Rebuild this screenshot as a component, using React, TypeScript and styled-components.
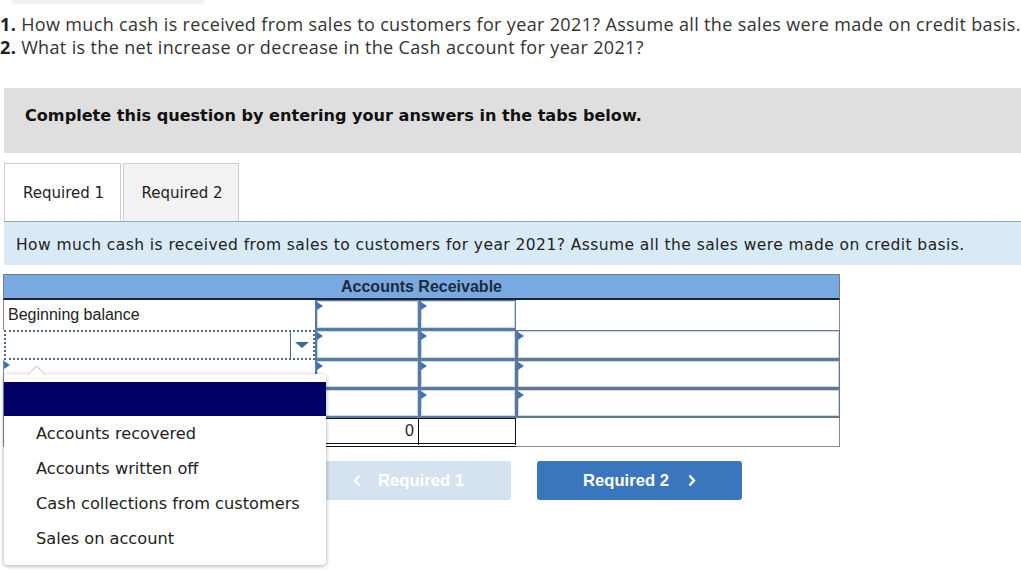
import React from "react";
import styled, { createGlobalStyle } from "styled-components";

const Global = createGlobalStyle`
  html, body { margin: 0; padding: 0; background: #fff; overflow: hidden; }
  body { width: 1021px; height: 572px; }
  * { box-sizing: border-box; }
`;

const Page = styled.div`
  width: 1021px;
  height: 572px;
  position: relative;
  overflow: hidden;
`;

const TopStub = styled.div`
  margin-left: 12px;
  width: 193px;
  height: 4px;
  background: #eef1f8;
  border-radius: 0 0 8px 8px;
`;

const Questions = styled.div`
  margin-top: 9px;
  font-family: "Open Sans", Lato, sans-serif;
  font-size: 18px;
  letter-spacing: 0.35px;
  line-height: 23px;
  color: #333;
  white-space: nowrap;
  b { color: #222; }
`;

const Banner = styled.div`
  margin: 29px 0 0 4px;
  height: 65px;
  background: #dfdfdf;
  display: flex;
  align-items: center;
  padding: 0 0 10px 21px;
  font-family: "DejaVu Sans", Verdana, sans-serif;
  font-weight: 700;
  font-size: 16.1px;
  color: #111;
  white-space: nowrap;
`;

const TabBar = styled.div`
  margin: 10px 0 0 4px;
  display: flex;
  gap: 2px;
  border-bottom: 1px solid #a3a3a3;
  height: 59px;
`;

const Tab = styled.div<{ $active?: boolean }>`
  width: ${(p) => (p.$active ? 117 : 116)}px;
  height: 58px;
  border: 1px solid #cccccc;
  border-bottom: none;
  background: ${(p) => (p.$active ? "#fff" : "#f2f2f2")};
  display: flex;
  align-items: center;
  justify-content: center;
  padding-left: 2px;
  font-family: "DejaVu Sans", Verdana, sans-serif;
  font-size: 15px;
  color: #222;
`;

const Instruction = styled.div`
  margin-left: 4px;
  height: 43px;
  background: #d9eaf7;
  display: flex;
  align-items: center;
  padding: 3px 0 0 12px;
  font-family: "DejaVu Sans", Verdana, sans-serif;
  font-size: 15.5px;
  letter-spacing: 0.43px;
  color: #222;
  white-space: nowrap;
`;

const Work = styled.div`
  position: relative;
  margin: 9px 0 0 3px;
`;

const Grid = styled.div`
  display: grid;
  grid-template-columns: 312px 104px 97px 324px;
  grid-template-rows: 26px 30px 30px 29px 29px 29px;
  width: 837px;
`;

const Header = styled.div`
  grid-column: 1 / span 4;
  background: #78a9e0;
  border: 1px solid #7d7d7d;
  border-bottom: 2px solid #1c2333;
  display: flex;
  align-items: center;
  justify-content: center;
  font-family: "Liberation Sans", Arial, sans-serif;
  font-weight: 700;
  font-size: 16px;
  color: #1d2a3c;
  padding-top: 1px;
`;

const Label = styled.div`
  position: relative;
  border-left: 1px solid #8a8a8a;
  display: flex;
  align-items: center;
  padding-left: 4px;
  font-family: "Liberation Sans", Arial, sans-serif;
  font-size: 16px;
  color: #222;
`;

const Marker = styled.span`
  position: absolute;
  top: 1px;
  left: 0;
  width: 0;
  height: 0;
  border-left: 6px solid #3f72b5;
  border-top: 4px solid transparent;
  border-bottom: 4px solid transparent;
`;

const Input = styled.div<{ $dark?: boolean }>`
  position: relative;
  background: #fff;
  border: 1px solid ${(p) => (p.$dark ? "#64768c" : "#5a7aa4")};
  border-left-width: 2px;
  border-bottom-width: 2px;
  box-shadow: inset 0 0 0 1px #c4daf2;
`;

const Plain = styled.div<{ $bottom?: boolean }>`
  background: #fff;
  border-right: 1px solid #8a8a8a;
  border-bottom: ${(p) => (p.$bottom ? "1px solid #8a8a8a" : "none")};
`;

const Select = styled.div`
  position: relative;
  margin-left: 1px;
  border: 2px dotted #4d6a91;
  display: flex;
  justify-content: flex-end;
  background: #fff;
`;

const Arrow = styled.div`
  width: 23px;
  border-left: 1px solid #4d6a91;
  display: flex;
  align-items: center;
  justify-content: center;
  &::after {
    content: "";
    border-top: 6px solid #3f6796;
    border-left: 7px solid transparent;
    border-right: 7px solid transparent;
  }
`;

const Total = styled.div<{ $first?: boolean }>`
  border: 1px solid #111;
  border-left-width: ${(p) => (p.$first ? 1 : 0)}px;
  border-bottom: 4px double #111;
  display: flex;
  align-items: center;
  justify-content: flex-end;
  padding-right: 4px;
  font-family: "Liberation Sans", Arial, sans-serif;
  font-size: 16px;
  color: #222;
`;

const Buttons = styled.div`
  display: flex;
  gap: 26px;
  margin: 14px 0 0 303px;
`;

const NavButton = styled.div<{ $disabled?: boolean }>`
  width: 205px;
  height: 39px;
  border-radius: 3px;
  background: ${(p) => (p.$disabled ? "#d5e2f0" : "#3a76bd")};
  color: #fff;
  display: flex;
  align-items: center;
  justify-content: center;
  gap: ${(p) => (p.$disabled ? 17 : 19)}px;
  font-family: "Liberation Sans", Arial, sans-serif;
  font-weight: 700;
  font-size: 16.6px;
`;

const Popup = styled.div`
  position: absolute;
  left: 1px;
  top: 100px;
  width: 322px;
  height: 191px;
  background: #fff;
  border-radius: 4px;
  box-shadow: 0 1px 4px rgba(0, 0, 0, 0.35);
  padding-top: 8px;
  z-index: 5;
  &::before {
    content: "";
    position: absolute;
    left: 26px;
    top: -6px;
    width: 12px;
    height: 12px;
    background: #fff;
    border-top: 1px solid #d0d0d0;
    border-left: 1px solid #d0d0d0;
    transform: rotate(45deg);
  }
`;

const Highlight = styled.div`
  position: relative;
  height: 34px;
  background: #000066;
`;

const Option = styled.div`
  height: 35px;
  display: flex;
  align-items: center;
  padding-left: 32px;
  font-family: "DejaVu Sans", Verdana, sans-serif;
  font-size: 16.2px;
  color: #222;
`;

const Chevron = ({ dir }: { dir: "left" | "right" }) => (
  <svg width="8" height="13" viewBox="0 0 8 13">
    <path
      d={dir === "left" ? "M6.5 1.5 L2 6.5 L6.5 11.5" : "M1.5 1.5 L6 6.5 L1.5 11.5"}
      fill="none"
      stroke="#fff"
      strokeWidth="2.4"
    />
  </svg>
);

export default function App() {
  return (
    <Page>
      <Global />
      <TopStub />
      <Questions>
        <div>
          <b>1.</b> How much cash is received from sales to customers for year 2021? Assume all the sales were made on credit basis.
        </div>
        <div>
          <b>2.</b> What is the net increase or decrease in the Cash account for year 2021?
        </div>
      </Questions>
      <Banner>Complete this question by entering your answers in the tabs below.</Banner>
      <TabBar>
        <Tab $active>Required 1</Tab>
        <Tab>Required 2</Tab>
      </TabBar>
      <Instruction>
        How much cash is received from sales to customers for year 2021? Assume all the sales were made on credit basis.
      </Instruction>
      <Work>
        <Grid>
          <Header>Accounts Receivable</Header>

          <Label>Beginning balance</Label>
          <Input><Marker /></Input>
          <Input><Marker /></Input>
          <Plain />

          <Select><Arrow /></Select>
          <Input><Marker /></Input>
          <Input><Marker /></Input>
          <Input $dark><Marker /></Input>

          <Label><Marker /></Label>
          <Input><Marker /></Input>
          <Input><Marker /></Input>
          <Input $dark><Marker /></Input>

          <Label />
          <Input />
          <Input><Marker /></Input>
          <Input $dark><Marker /></Input>

          <Label />
          <Total $first>0</Total>
          <Total />
          <Plain $bottom />
        </Grid>
        <Buttons>
          <NavButton $disabled>
            <Chevron dir="left" />
            <span>Required 1</span>
          </NavButton>
          <NavButton>
            <span>Required 2</span>
            <Chevron dir="right" />
          </NavButton>
        </Buttons>
        <Popup>
          <Highlight />
          <Option>Accounts recovered</Option>
          <Option>Accounts written off</Option>
          <Option>Cash collections from customers</Option>
          <Option>Sales on account</Option>
        </Popup>
      </Work>
    </Page>
  );
}
